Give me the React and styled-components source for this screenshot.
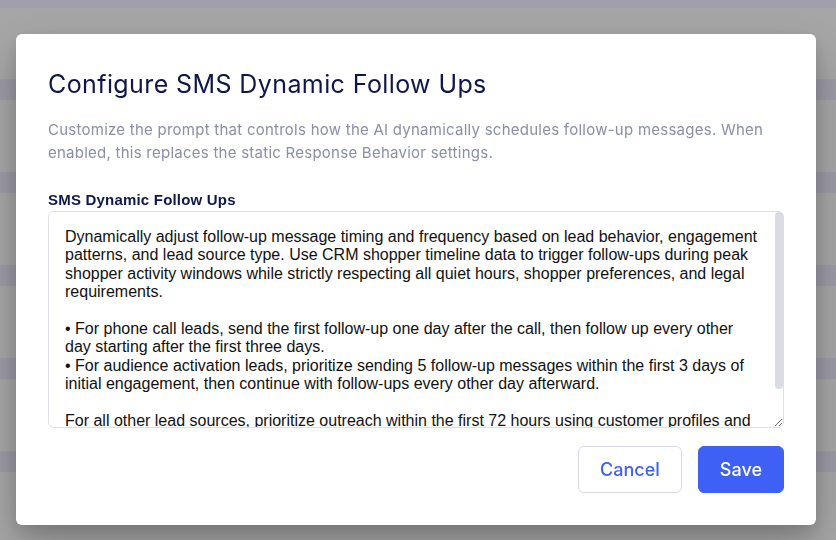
import React from 'react';
import styled, { createGlobalStyle } from 'styled-components';

const PROMPT = `Dynamically adjust follow-up message timing and frequency based on lead behavior, engagement patterns, and lead source type. Use CRM shopper timeline data to trigger follow-ups during peak shopper activity windows while strictly respecting all quiet hours, shopper preferences, and legal requirements.

• For phone call leads, send the first follow-up one day after the call, then follow up every other day starting after the first three days.
• For audience activation leads, prioritize sending 5 follow-up messages within the first 3 days of initial engagement, then continue with follow-ups every other day afterward.

For all other lead sources, prioritize outreach within the first 72 hours using customer profiles and recent activity, then reduce frequency gradually over the following weeks while monitoring responses.`;

const GlobalStyle = createGlobalStyle`
  html, body {
    margin: 0;
    padding: 0;
    height: 100%;
    overflow: hidden;
  }
  body {
    background: #a6a6a7;
    font-family: Inter, "Liberation Sans", sans-serif;
  }
`;

export default function App() {
  return (
    <>
      <GlobalStyle />
      <BackPage>
        <TopStrip />
        {Array.from({ length: 6 }).map((_, i) => (
          <BackRow key={i}>
            <RowGap />
            <RowStripe />
          </BackRow>
        ))}
      </BackPage>
      <Overlay>
        <Dialog>
          <Title>Configure SMS Dynamic Follow Ups</Title>
          <Description>
            Customize the prompt that controls how the AI dynamically schedules follow-up
            messages. When enabled, this replaces the static Response Behavior settings.
          </Description>
          <Field>
            <Label htmlFor="prompt">SMS Dynamic Follow Ups</Label>
            <AreaWrap>
              <PromptArea id="prompt" defaultValue={PROMPT} />
              <ScrollThumb />
            </AreaWrap>
          </Field>
          <Actions>
            <Button>Cancel</Button>
            <Button $primary>Save</Button>
          </Actions>
        </Dialog>
      </Overlay>
    </>
  );
}

const BackPage = styled.div`
  display: flex;
  flex-direction: column;
  height: 540px;
  overflow: hidden;
`;

const TopStrip = styled.div`
  height: 8px;
  flex-shrink: 0;
  background: #a09fab;
`;

const BackRow = styled.div`
  display: flex;
  flex-direction: column;
  flex-shrink: 0;
  & + & > div:first-child {
    height: 72px;
  }
`;

const RowGap = styled.div`
  height: 71px;
`;

const RowStripe = styled.div`
  height: 21px;
  background: #9b9aa6;
`;

const Overlay = styled.div`
  position: fixed;
  inset: 0;
  display: flex;
  align-items: flex-start;
  padding: 34px 0 0 16px;
`;

const Dialog = styled.div`
  --dialog-width: 800px;
  --dialog-padding: 32px;

  width: var(--dialog-width);
  box-sizing: border-box;
  padding: var(--dialog-padding);
  background: #ffffff;
  border-radius: 6px;
  box-shadow: 0 20px 40px rgba(0, 0, 0, 0.22), 0 6px 16px rgba(0, 0, 0, 0.12);
  display: flex;
  flex-direction: column;
`;

const Title = styled.h2`
  margin: 0;
  padding-top: 2px;
  font-family: Inter, sans-serif;
  font-size: 25px;
  line-height: 32px;
  font-weight: 400;
  letter-spacing: 0.4px;
  color: #0e1748;
`;

const Description = styled.p`
  margin: 18px 0 0;
  font-family: Inter, sans-serif;
  font-size: 15px;
  line-height: 23px;
  letter-spacing: 0.25px;
  color: #8a8fa7;
`;

const Field = styled.div`
  display: flex;
  flex-direction: column;
  gap: 3px;
  margin-top: 27px;
`;

const Label = styled.label`
  font-family: "Liberation Sans", Arial, sans-serif;
  font-size: 15px;
  line-height: 17px;
  font-weight: 700;
  letter-spacing: 0.2px;
  color: #0f1a4a;
`;

const AreaWrap = styled.div`
  position: relative;
  display: flex;
`;

const PromptArea = styled.textarea`
  box-sizing: border-box;
  width: 100%;
  height: 217px;
  padding: 16px 26px 0 16px;
  border: 1px solid #dcdee8;
  border-radius: 6px;
  font-family: "Liberation Sans", Arial, sans-serif;
  font-size: 16px;
  line-height: 18.4px;
  color: #111111;
  resize: vertical;
  outline: none;
`;

const ScrollThumb = styled.div`
  position: absolute;
  top: 1px;
  right: 1px;
  width: 8px;
  height: 177px;
  border-radius: 4px;
  background: #d9dce5;
  pointer-events: none;
`;

const Actions = styled.div`
  display: flex;
  justify-content: flex-end;
  gap: 16px;
  margin-top: 18px;
`;

const Button = styled.button`
  height: 47px;
  padding: 0 21px;
  border-radius: 6px;
  font-family: Inter, sans-serif;
  font-size: 18px;
  font-weight: 500;
  cursor: pointer;
  border: 1px solid ${p => (p.$primary ? '#3f60f5' : '#d9dce8')};
  background: ${p => (p.$primary ? '#3f60f5' : '#ffffff')};
  color: ${p => (p.$primary ? '#ffffff' : '#3f60f5')};
`;
